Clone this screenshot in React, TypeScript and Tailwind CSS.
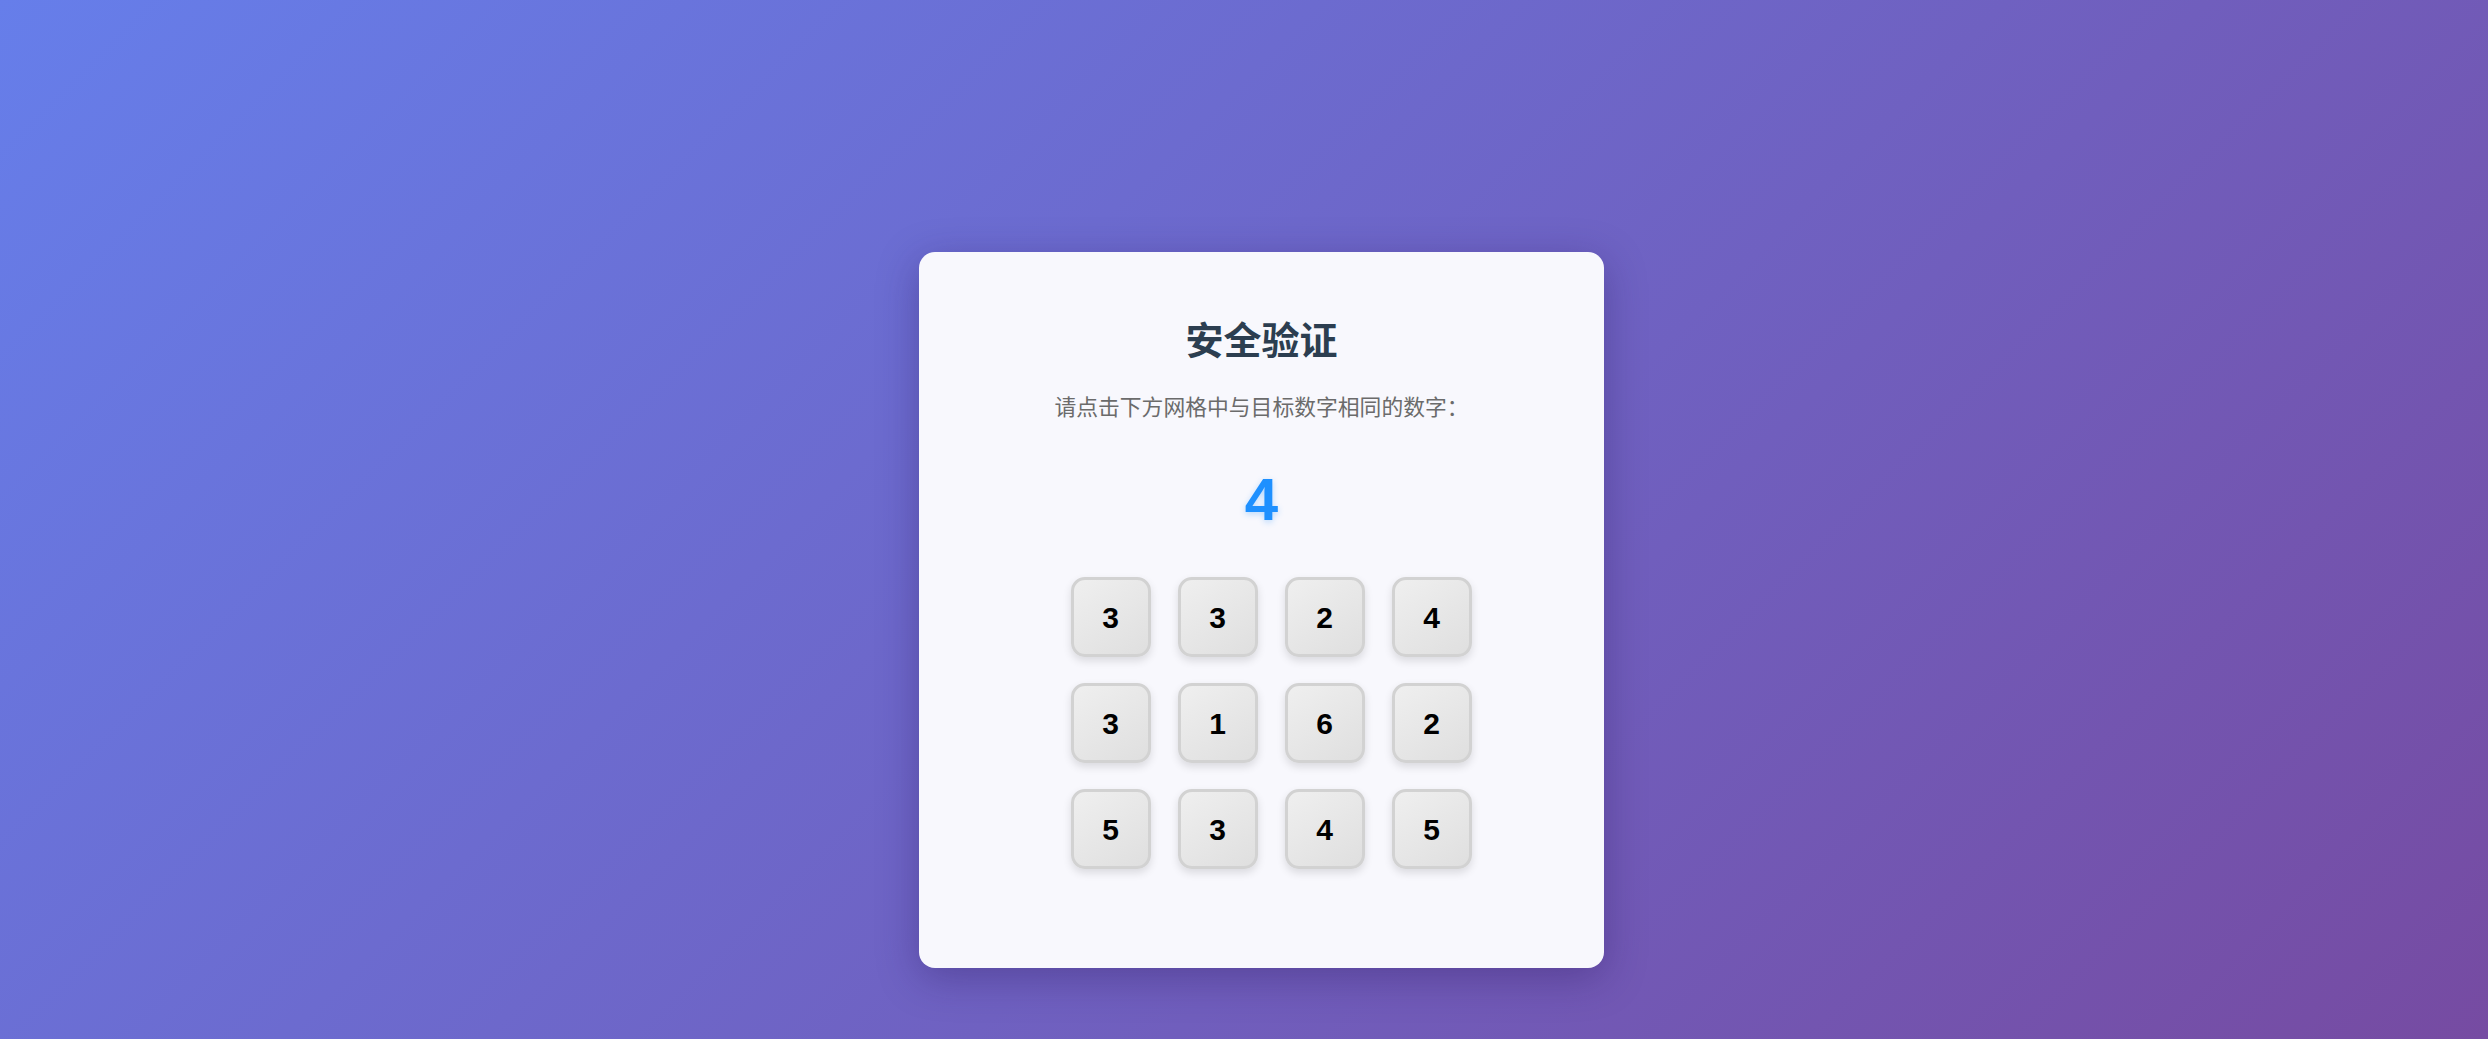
import React, { useState } from 'react';

const grid = [3, 3, 2, 4, 3, 1, 6, 2, 5, 3, 4, 5];
const target = 4;

export default function App() {
  const [picked, setPicked] = useState<number | null>(null);

  return (
    <div className="min-h-screen w-full flex justify-center items-start pt-[252px] pl-[35px] bg-[linear-gradient(135deg,#667eea_0%,#764ba2_100%)] font-['Liberation_Sans','Noto_Sans_CJK_SC',sans-serif]">
      <div className="w-[685px] bg-[#f8f8fd] rounded-[16px] shadow-[0_10px_40px_rgba(40,20,90,0.35)] pt-[62px] pb-[99px] flex flex-col items-center">
        <h1 className="text-[38px] leading-[48px] font-bold text-[#2c3e50] font-['Noto_Sans_CJK_SC',sans-serif]">
          安全验证
        </h1>
        <p className="mt-[30px] text-[21.8px] leading-[28px] text-[#6b6b6b] font-['Noto_Sans_CJK_SC',sans-serif]">
          请点击下方网格中与目标数字相同的数字：
        </p>
        <div className="mt-[44px] text-[60px] leading-[72px] font-bold text-[#1e90ff] [text-shadow:0_2px_6px_rgba(30,144,255,0.3)]">
          {target}
        </div>
        <div className="mt-[41px] w-full flex justify-center pl-[19px]">
          <div className="grid grid-cols-4 gap-x-[27px] gap-y-[26px]">
            {grid.map((n, i) => (
              <button
                key={i}
                onClick={() => setPicked(i)}
                className={`w-[80px] h-[80px] rounded-[14px] border-[3px] border-[#d2d2d2] bg-[linear-gradient(145deg,#efefef,#dfdfdf)] shadow-[0_4px_8px_rgba(0,0,0,0.12)] flex items-center justify-center text-[30px] font-bold text-black ${picked === i ? 'ring-2 ring-[#1e90ff]' : ''}`}
              >
                {n}
              </button>
            ))}
          </div>
        </div>
      </div>
    </div>
  );
}
